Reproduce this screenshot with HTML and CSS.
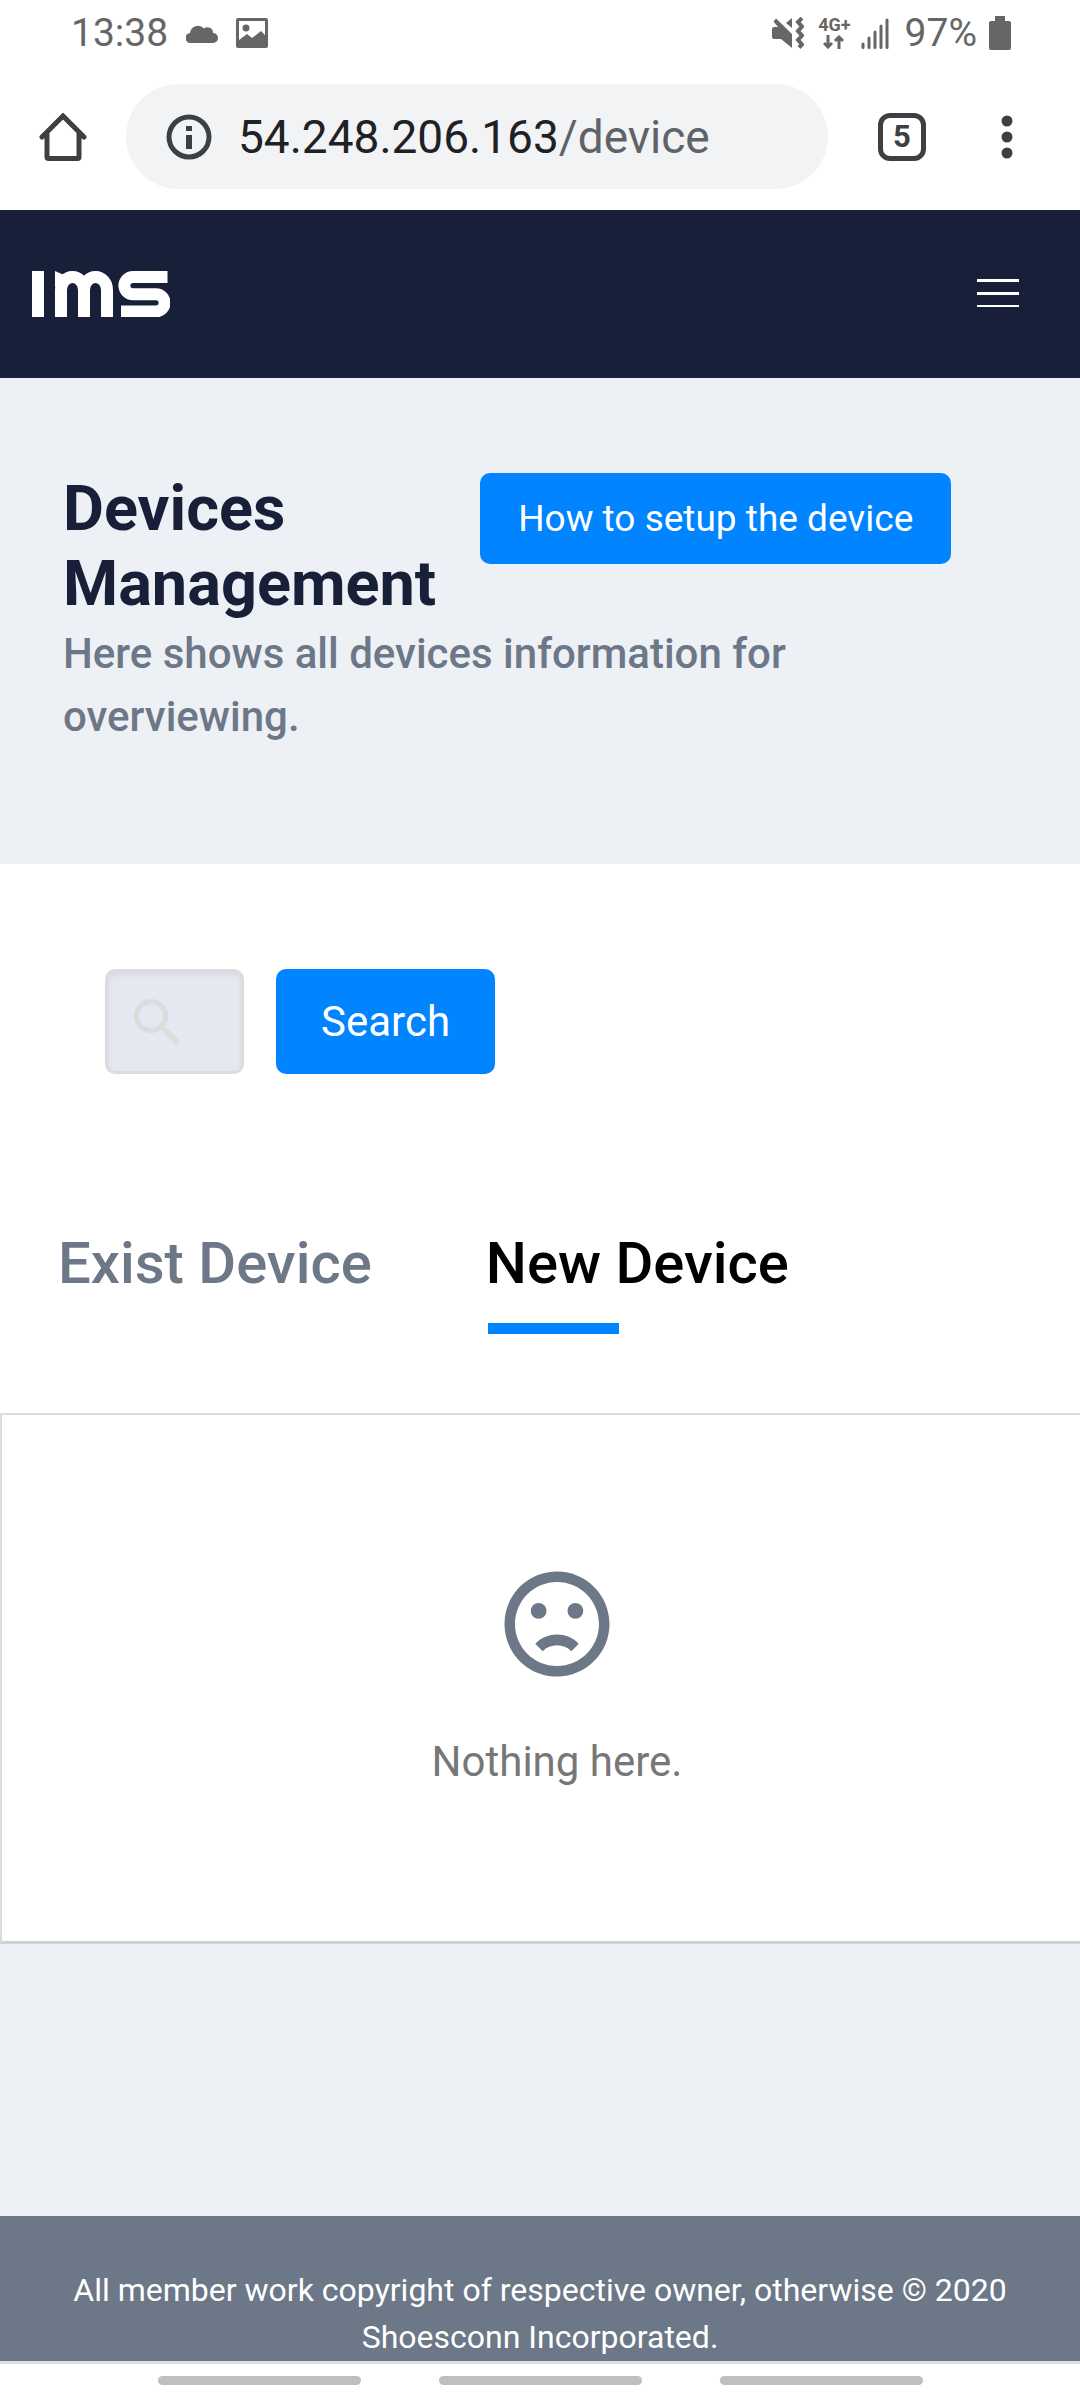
FILE: index.html
```html
<!DOCTYPE html>
<html lang="en">
<head>
<meta charset="utf-8">
<meta name="viewport" content="width=device-width">
<title>IMS - Devices Management</title>
<link rel="stylesheet" href="styles.css">
</head>
<body>
<div class="status-bar">
  <div class="status-left">
    <span class="status-text">13:38</span>
    <svg class="cloud" width="32" height="20" viewBox="0 0 32 20" aria-hidden="true"><path d="M5 20a5 5 0 0 1-1-10A8 8 0 0 1 18 5.500a5.500 5.500 0 0 1 9 4.500A5 5 0 0 1 27 20z"/></svg>
    <svg class="photo" width="32" height="30" viewBox="0 0 32 30" aria-hidden="true"><path fill-rule="evenodd" d="M2 0h28q2 0 2 2v26q0 2-2 2H2q-2 0-2-2V2q0-2 2-2zM3 3v19l8-6 5 4 9-7 4 4V3z"/><circle cx="10" cy="10" r="3.500"/></svg>
  </div>
  <div class="status-right">
    <svg width="32" height="32" viewBox="0 0 32 32" aria-hidden="true"><path d="M0 12q0-2 2-2h4L1.500 4.500 4 1.500 20 17v14L9 22H2q-2 0-2-2z"/><path d="M20 1v10l-6-5z"/><path class="wave" d="M30 1l-4 4 4 4.500-4 4.500 4 4.500-4 4.500 4 4.500-3 3"/></svg>
    <span class="network"><span>4G+</span><svg width="22" height="14" viewBox="0 0 22 14" aria-hidden="true"><path class="arrows" d="M5 0v12M1 8l4 4 4-4M16 14V2M12 6l4-4 4 4"/></svg></span>
    <svg class="signal" width="28" height="31" viewBox="0 0 28 31" aria-hidden="true"><path class="bars" d="M2 26v3.500M8 20v9.500M14 14v15.500M20 8v21.500M26 2v27.500"/></svg>
    <span class="status-text">97%</span>
    <svg width="22" height="34" viewBox="0 0 22 34" aria-hidden="true"><path d="M6 0h10v5h4q2 0 2 2v25q0 2-2 2H2q-2 0-2-2V7q0-2 2-2h4z"/></svg>
  </div>
</div>

<div class="browser-bar">
  <button class="icon-button" aria-label="Home"><svg width="48" height="48" viewBox="0 0 48 48"><path class="line" d="M3 24L24 3l21 21M8 20v24q0 1.500 1.500 1.500h29q1.500 0 1.500-1.500V20"/></svg></button>
  <div class="address">
    <svg width="46" height="46" viewBox="0 0 46 46" aria-hidden="true"><circle class="line" cx="23" cy="23" r="20"/><path class="solid" d="M20 12h6v5h-6zM20 21h6v14h-6z"/></svg>
    <span class="url">54.248.206.163<span class="path">/device</span></span>
  </div>
  <button class="tab-count" aria-label="Open tabs">5</button>
  <button class="icon-button" aria-label="More"><svg width="12" height="48" viewBox="0 0 12 48"><g class="solid"><circle cx="6" cy="8" r="5.500"/><circle cx="6" cy="24" r="5.500"/><circle cx="6" cy="40" r="5.500"/></g></svg></button>
</div>

<header class="site-header">
  <a class="logo" href="#" aria-label="IMS"><svg width="138" height="46" viewBox="0 0 138 46"><path class="logo-line" d="M6 0v46M29 46V19a11.500 13 0 0 1 23 0v27M52 46V19a11.500 13 0 0 1 23 0v27"/><path class="logo-fill" d="M23 0l9 4v12h-9z"/><path class="logo-line" d="M135.500 6H101a8.600 8.600 0 0 0 0 17.200h23a8.600 8.600 0 0 1 0 17.200H89"/></svg></a>
  <button class="menu" aria-label="Menu"><span></span><span></span><span></span></button>
</header>

<main>
  <section class="hero">
    <div class="hero-top">
      <h1>Devices Management</h1>
      <button class="primary">How to setup the device</button>
    </div>
    <p>Here shows all devices information for overviewing.</p>
  </section>

  <section class="devices">
    <form class="search">
      <label class="search-box">
        <svg width="46" height="46" viewBox="3 3 17.500 17.500" aria-hidden="true"><path d="M15.500 14h-.79l-.28-.27A6.471 6.471 0 0 0 16 9.500 6.500 6.500 0 1 0 9.500 16c1.610 0 3.090-.59 4.230-1.570l.27.280v.790l5 4.990L20.490 19l-4.990-5zm-6 0C7.010 14 5 11.990 5 9.500S7.010 5 9.500 5 14 7.010 14 9.500 11.990 14 9.500 14z"/></svg>
        <input type="text" aria-label="Search devices">
      </label>
      <button class="primary large" type="button">Search</button>
    </form>
    <nav class="tabs">
      <a href="#">Exist Device</a>
      <a class="active" href="#" aria-current="page">New Device</a>
    </nav>
    <div class="results">
      <svg width="126" height="126" viewBox="0 0 24 24" aria-hidden="true"><path d="M11.990 2C6.470 2 2 6.480 2 12s4.470 10 9.990 10C17.520 22 22 17.520 22 12S17.520 2 11.990 2zM12 20c-4.420 0-8-3.580-8-8s3.580-8 8-8 8 3.580 8 8-3.580 8-8 8z"/><circle cx="8.500" cy="9.500" r="1.500"/><circle cx="15.500" cy="9.500" r="1.500"/><path d="M12 14c-1.600 0-3.100.65-4.150 1.750l1.420 1.420a3.900 3.900 0 0 1 5.460 0l1.420-1.420A5.800 5.800 0 0 0 12 14z"/></svg>
      <p>Nothing here.</p>
    </div>
  </section>
</main>

<footer class="site-footer">All member work copyright of respective owner, otherwise © 2020 Shoesconn Incorporated.</footer>

<div class="gesture-bar"><span></span><span></span><span></span></div>
</body>
</html>
```
FILE: styles.css
```css
* {
  box-sizing: border-box;
}

body {
  display: flex;
  flex-direction: column;
  min-height: 100vh;
  margin: 0;
  background: #fff;
  color: #181f38;
  font-family: Roboto, "Liberation Sans", sans-serif;
  font-size: 42px;
}

h1, p {
  margin: 0;
}

svg {
  display: block;
  flex: none;
}

button {
  border: 0;
  padding: 0;
  background: none;
  font-family: inherit;
}

a {
  text-decoration: none;
}

/* Phone status bar */
.status-bar {
  display: flex;
  justify-content: space-between;
  height: 66px;
  padding: 0 69px 0 71px;
  color: #666;
  fill: #666;
}

.status-left, .status-right {
  display: flex;
  align-items: center;
}

.status-text {
  font-size: 39px;
  line-height: 66px;
}

.cloud {
  margin-left: 18px;
}

.photo {
  margin-left: 18px;
}

.network {
  display: flex;
  flex-direction: column;
  align-items: center;
  gap: 2px;
  margin: 0 10px 0 14px;
  font-size: 18px;
  font-weight: 700;
  line-height: 16px;
}

.signal {
  margin-right: 16px;
}

.status-right .status-text {
  margin-right: 12px;
}

.wave, .arrows, .bars {
  fill: none;
  stroke: #666;
  stroke-width: 4;
}

.arrows {
  stroke-width: 3;
}

.bars {
  stroke-width: 3;
  stroke-linecap: round;
}

/* Browser toolbar */
.browser-bar {
  display: flex;
  align-items: center;
  height: 144px;
  padding: 0 67px 3px 39px;
}

.address {
  display: flex;
  flex: 1;
  align-items: center;
  gap: 26px;
  height: 105px;
  margin: 0 50px 0 39px;
  padding: 0 40px;
  border-radius: 53px;
  background: #f1f3f4;
}

.url {
  color: #202124;
  font-size: 46px;
}

.path {
  color: #5f6368;
}

.tab-count {
  width: 48px;
  height: 48px;
  margin-right: 75px;
  border: 5px solid #3c4043;
  border-radius: 12px;
  color: #3c4043;
  font-size: 31px;
  font-weight: 700;
  line-height: 38px;
}

.line {
  fill: none;
  stroke: #3c4043;
  stroke-width: 5;
  stroke-linecap: round;
}

.solid {
  fill: #3c4043;
}

/* Site header */
.site-header {
  display: flex;
  align-items: center;
  justify-content: space-between;
  height: 168px;
  padding: 0 61px 0 32px;
  background: #181f38;
}

.logo-line {
  fill: none;
  stroke: #fff;
  stroke-width: 12;
}

.logo-fill {
  fill: #fff;
}

.menu {
  display: flex;
  flex-direction: column;
  gap: 10px;
  width: 42px;
  padding-bottom: 3px;
}

.menu span {
  height: 3px;
  background: #fff;
}

.menu span:last-child {
  height: 2px;
}

/* Page heading */
.hero {
  padding: 93px 63px 116px;
  background: #edf1f6;
}

.hero-top {
  display: flex;
  align-items: flex-start;
  gap: 44px;
  margin-bottom: 1px;
}

h1 {
  width: min-content;
  font-size: 63px;
  font-weight: 700;
  line-height: 75px;
}

.hero p {
  color: #6c7787;
  font-weight: 500;
  line-height: 63px;
}

.primary {
  height: 91px;
  margin-top: 2px;
  padding: 0 38px;
  border-radius: 10px;
  background: #0084ff;
  color: #fff;
  font-size: 37px;
}

.primary.large {
  height: 105px;
  margin-top: 0;
  padding: 0 45px;
  font-size: 42px;
}

/* Search */
.search {
  display: flex;
  gap: 32px;
  padding: 105px;
}

.search-box {
  display: flex;
  align-items: center;
  width: 139px;
  height: 105px;
  padding-left: 26px;
  border: 3px solid #dcdcdc;
  border-radius: 10px;
  background: #e4e9f1;
  box-shadow: inset 0 3px 5px #0001;
  fill: #dcdcdc;
}

.search-box input {
  flex: 1;
  min-width: 0;
  border: 0;
  outline: 0;
  background: transparent;
  font: inherit;
}

/* Tabs */
.tabs {
  display: flex;
  gap: 114px;
  padding: 50px 58px 79px;
}

.tabs a {
  color: #6c7787;
  font-size: 58px;
  font-weight: 500;
  line-height: 68px;
}

.tabs .active {
  color: #000;
}

.tabs .active::after {
  display: block;
  width: 131px;
  height: 11px;
  margin: 26px 0 0 2px;
  background: #0084ff;
  content: "";
}

/* Result card */
.results {
  display: flex;
  flex-direction: column;
  align-items: center;
  gap: 43px;
  padding: 146px 0 148px 32px;
  border: solid #dcdcdc;
  border-width: 2px 0 3px 2px;
  border-bottom-color: #d0d1d2;
  fill: #6c7787;
}

.results p {
  color: #777;
  line-height: 63px;
}

main {
  flex: 1;
  background: #edf1f6;
}

.devices {
  background: #fff;
}

/* Footer */
.site-footer {
  padding: 51px 63px 0;
  background: #6c7787;
  color: #fff;
  font-size: 32px;
  line-height: 47px;
  text-align: center;
}

.gesture-bar {
  display: flex;
  justify-content: center;
  gap: 78px;
  height: 39px;
  padding-top: 12px;
  border-top: 3px solid #dcdfe0;
}

.gesture-bar span {
  width: 203px;
  height: 9px;
  border-radius: 5px;
  background: #bfbfbf;
}
```
